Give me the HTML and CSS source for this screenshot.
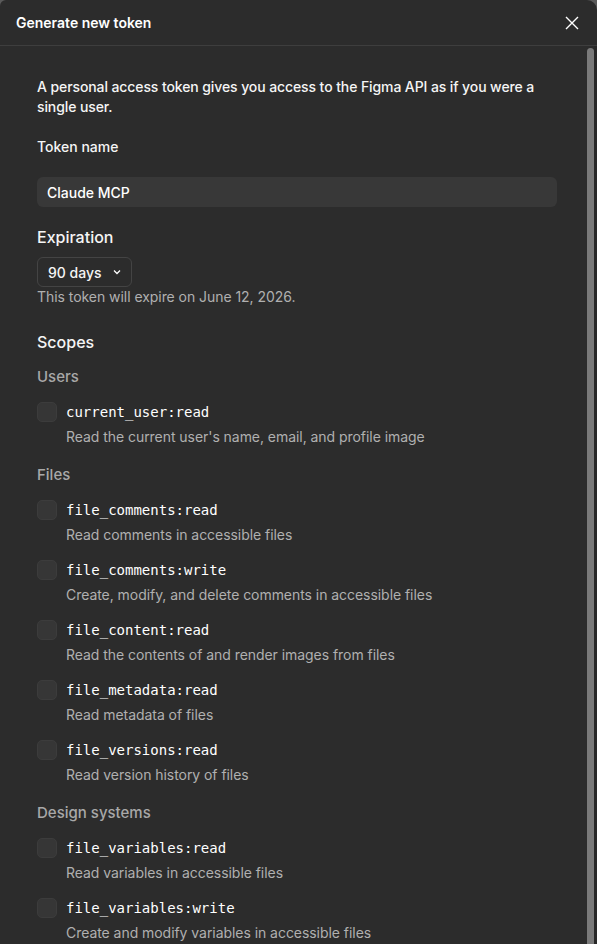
FILE: index.html
```html
<!DOCTYPE html>
<html lang="en">
<head>
<meta charset="UTF-8">
<meta name="viewport" content="width=device-width, initial-scale=1.0">
<title>Generate new token</title>
<link rel="stylesheet" href="styles.css">
</head>
<body>

<div class="modal">
    <div class="modal-header">
        <h2>Generate new token</h2>
        <button class="close-btn" aria-label="Close">
            <svg width="16" height="16" viewBox="0 0 16 16"><path d="M2 2 L14 14 M14 2 L2 14" stroke="#fff" stroke-width="1.4" fill="none"/></svg>
        </button>
    </div>

    <div class="modal-main">
        <div class="modal-body">
            <p class="intro">A personal access token gives you access to the Figma API as if you were a single user.</p>

            <label class="field-label" for="tokenName">Token name</label>
            <input class="text-input" type="text" id="tokenName" value="Claude MCP">

            <h3 class="section-title">Expiration</h3>
            <div class="select">
                <span>90 days</span>
                <svg width="8" height="6" viewBox="0 0 8 6"><path d="M1 1.5 L4 4.5 L7 1.5" stroke="#fff" stroke-width="1.3" fill="none"/></svg>
            </div>
            <p class="hint">This token will expire on June 12, 2026.</p>

            <h3 class="section-title scopes">Scopes</h3>

            <div class="group">
                <div class="group-title">Users</div>
                <div class="scope">
                    <span class="checkbox"></span>
                    <div>
                        <div class="scope-name">current_user:read</div>
                        <div class="scope-desc">Read the current user's name, email, and profile image</div>
                    </div>
                </div>
            </div>

            <div class="group">
                <div class="group-title">Files</div>
                <div class="scope">
                    <span class="checkbox"></span>
                    <div>
                        <div class="scope-name">file_comments:read</div>
                        <div class="scope-desc">Read comments in accessible files</div>
                    </div>
                </div>
                <div class="scope">
                    <span class="checkbox"></span>
                    <div>
                        <div class="scope-name">file_comments:write</div>
                        <div class="scope-desc">Create, modify, and delete comments in accessible files</div>
                    </div>
                </div>
                <div class="scope">
                    <span class="checkbox"></span>
                    <div>
                        <div class="scope-name">file_content:read</div>
                        <div class="scope-desc">Read the contents of and render images from files</div>
                    </div>
                </div>
                <div class="scope">
                    <span class="checkbox"></span>
                    <div>
                        <div class="scope-name">file_metadata:read</div>
                        <div class="scope-desc">Read metadata of files</div>
                    </div>
                </div>
                <div class="scope">
                    <span class="checkbox"></span>
                    <div>
                        <div class="scope-name">file_versions:read</div>
                        <div class="scope-desc">Read version history of files</div>
                    </div>
                </div>
            </div>

            <div class="group">
                <div class="group-title">Design systems</div>
                <div class="scope">
                    <span class="checkbox"></span>
                    <div>
                        <div class="scope-name">file_variables:read</div>
                        <div class="scope-desc">Read variables in accessible files</div>
                    </div>
                </div>
                <div class="scope">
                    <span class="checkbox"></span>
                    <div>
                        <div class="scope-name">file_variables:write</div>
                        <div class="scope-desc">Create and modify variables in accessible files</div>
                    </div>
                </div>
            </div>
        </div>

        <div class="scrollbar">
            <div class="scroll-thumb"></div>
        </div>
    </div>
</div>

</body>
</html>
```

FILE: styles.css
```css
html, body {
    height: 100%;
}
body {
    margin: 0;
    background-color: #5a5a5a;
    font-family: Inter, "Noto Sans", sans-serif;
    color: #f5f5f5;
    overflow: hidden;
}
.modal {
    height: 100vh;
    display: flex;
    flex-direction: column;
    background-color: #2c2c2c;
    border-radius: 6px 10px 0 0;
}
.modal-header {
    height: 45px;
    flex-shrink: 0;
    display: flex;
    align-items: center;
    justify-content: space-between;
    padding: 0 13px 0 16px;
    border-bottom: 1px solid #3e3e3e;
}
.modal-header h2 {
    margin: 0;
    font-size: 14px;
    font-weight: 600;
    color: #fff;
}
.close-btn {
    width: 24px;
    height: 24px;
    padding: 0;
    border: none;
    background: none;
    display: flex;
    align-items: center;
    justify-content: center;
    cursor: pointer;
}
.modal-main {
    flex: 1;
    min-height: 0;
    display: flex;
}
.modal-body {
    flex: 1;
    min-width: 0;
    overflow: hidden;
    padding: 31px 30px 0 37px;
}
.scrollbar {
    width: 7px;
    padding-top: 2px;
    border-right: 3px solid #282828;
    display: flex;
}
.scroll-thumb {
    flex: 1;
    background-color: #7a7a7a;
    border-radius: 4px 4px 0 0;
}
.intro {
    margin: 0;
    font-size: 14px;
    font-weight: 500;
    letter-spacing: -0.1px;
    line-height: 20px;
}
.field-label {
    display: block;
    margin-top: 20px;
    font-size: 14px;
    font-weight: 500;
    line-height: 20px;
}
.text-input {
    display: block;
    width: 100%;
    box-sizing: border-box;
    height: 30px;
    margin-top: 20px;
    padding: 0 10px;
    border: none;
    border-radius: 6px;
    background-color: #383838;
    color: #fff;
    font-family: inherit;
    font-size: 14px;
    font-weight: 500;
}
.section-title {
    margin: 19px 0 0;
    font-size: 16px;
    font-weight: 500;
    line-height: 22px;
}
.section-title.scopes {
    margin-top: 24px;
}
.select {
    display: inline-flex;
    align-items: center;
    gap: 11px;
    height: 30px;
    box-sizing: border-box;
    margin-top: 9px;
    padding: 0 10px 0 10px;
    border: 1px solid #444;
    border-radius: 6px;
    font-size: 14px;
    font-weight: 500;
}
.hint {
    margin: 0;
    font-size: 14px;
    letter-spacing: -0.05px;
    line-height: 20px;
    color: #b0b0b0;
}
.group {
    display: flex;
    flex-direction: column;
    gap: 15px;
    margin-top: 14px;
}
.group + .group {
    margin-top: 18px;
}
.group-title {
    font-size: 15px;
    font-weight: 500;
    line-height: 20px;
    color: #a8a8a8;
}
.scope {
    display: flex;
    gap: 9px;
}
.checkbox {
    width: 20px;
    height: 20px;
    box-sizing: border-box;
    flex-shrink: 0;
    border: 1px solid #3c3c3c;
    border-radius: 5px;
    background-color: #363636;
}
.scope-name {
    font-family: "DejaVu Sans Mono", monospace;
    font-size: 14px;
    line-height: 20px;
    color: #fff;
}
.scope-desc {
    margin-top: 5px;
    font-size: 14px;
    letter-spacing: -0.05px;
    line-height: 20px;
    color: #b0b0b0;
}
```
